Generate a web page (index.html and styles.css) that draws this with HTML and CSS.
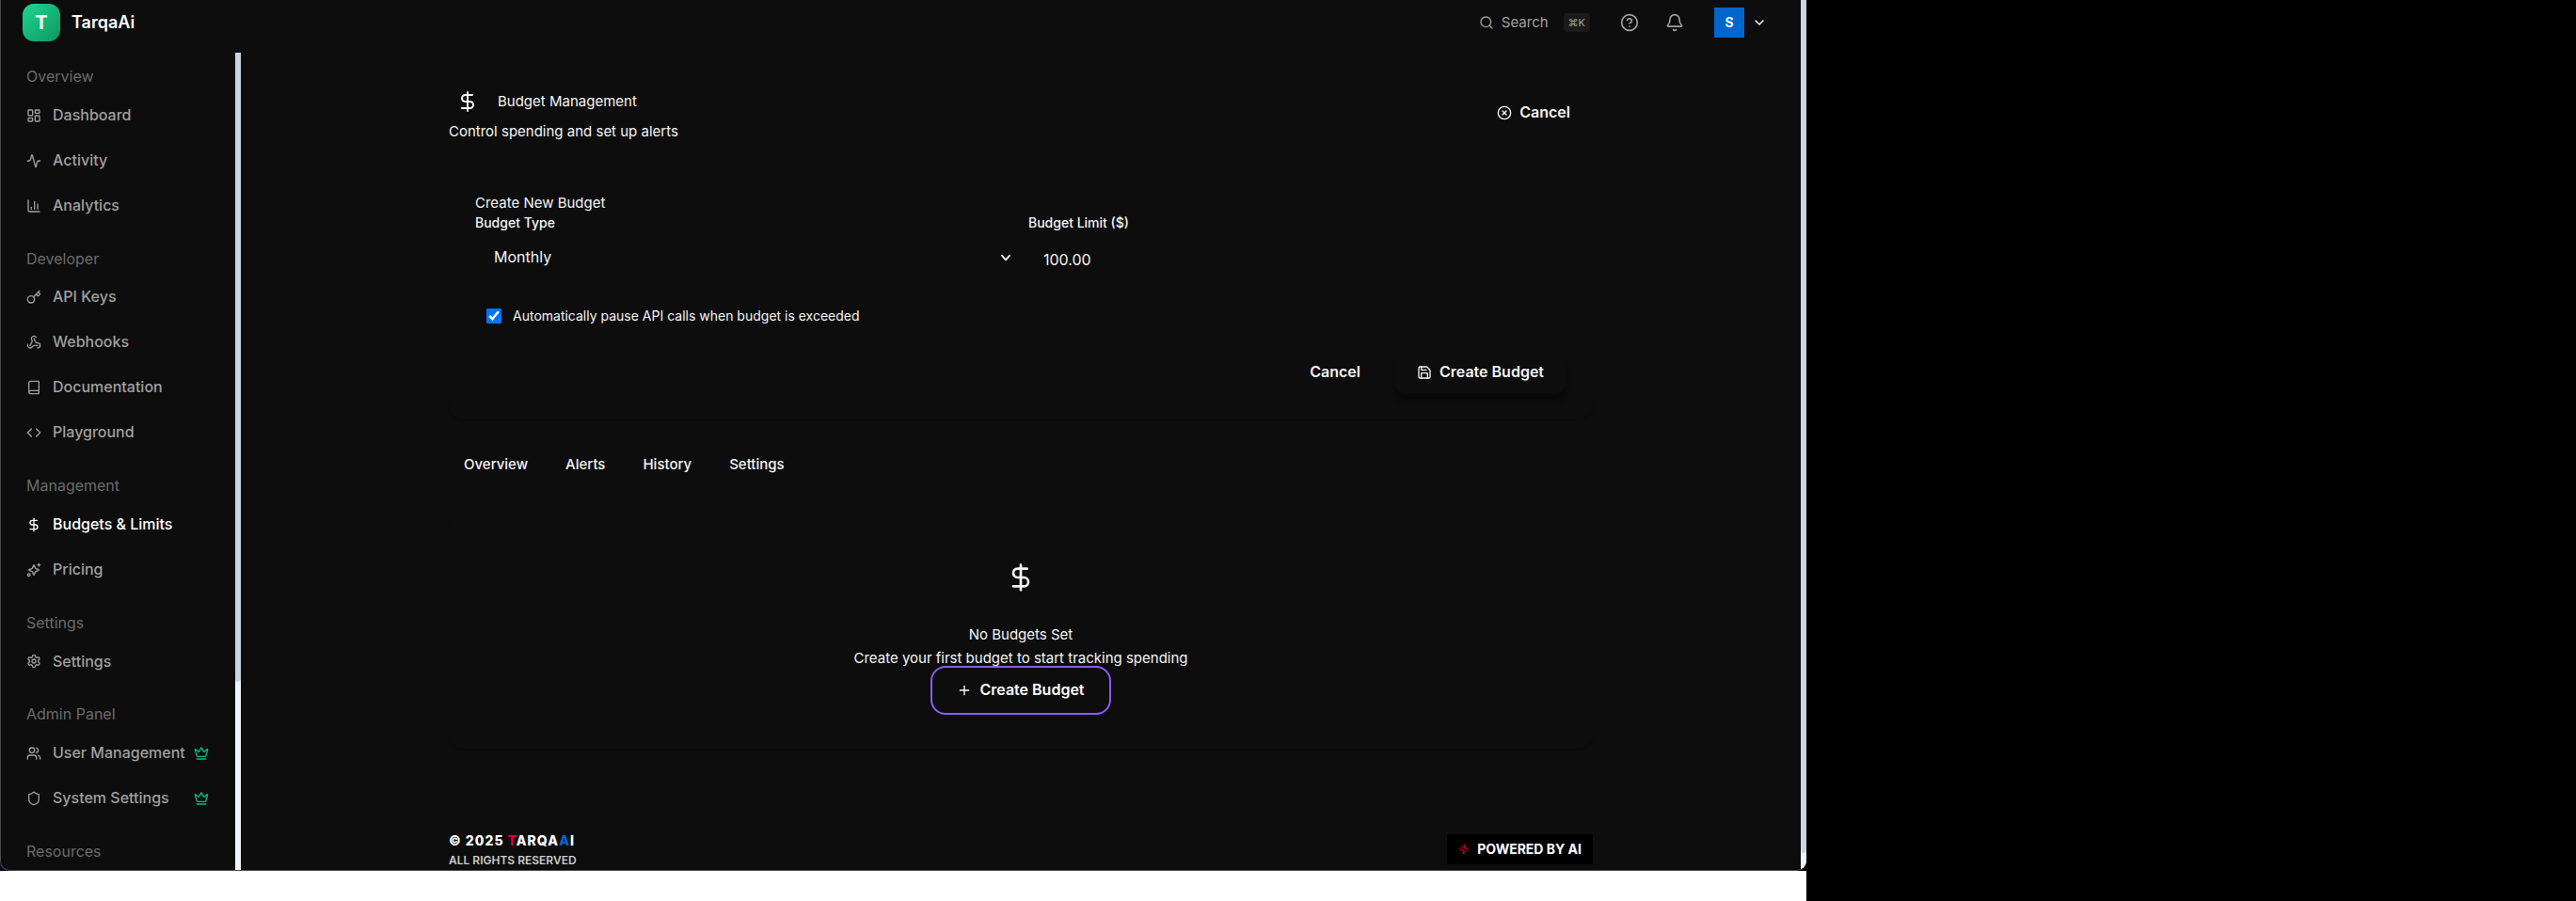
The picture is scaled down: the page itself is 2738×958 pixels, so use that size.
FILE: index.html
```html
<!DOCTYPE html>
<html lang="en">
<head>
    <meta charset="UTF-8">
    <meta name="viewport" content="width=device-width, initial-scale=1.0">
    <title>TarqaAi - Budgets &amp; Limits</title>
    <link rel="stylesheet" href="styles.css">
</head>
<body>
    <div class="screen">
        <div class="window">
        <div class="app">
            <div class="shell">
                <header class="topbar">
                    <a class="brand" href="#"><span class="brand-mark">T</span>TarqaAi</a>
                    <div class="topbar-actions">
                        <button class="search" type="button">
                            <svg class="icon" viewBox="0 0 24 24"><circle cx="11" cy="11" r="8"/><path d="m21 21-4.3-4.3"/></svg>
                            <span>Search</span>
                            <kbd>⌘K</kbd>
                        </button>
                        <button class="icon-btn" type="button" aria-label="Help">
                            <svg class="icon icon-md" viewBox="0 0 24 24"><circle cx="12" cy="12" r="10"/><path d="M9.09 9a3 3 0 0 1 5.83 1c0 2-3 3-3 3"/><path d="M12 17h.01"/></svg>
                        </button>
                        <button class="icon-btn" type="button" aria-label="Notifications">
                            <svg class="icon icon-md" viewBox="0 0 24 24"><path d="M10.27 21a2 2 0 0 0 3.46 0"/><path d="M3.26 15.33A1 1 0 0 0 4 17h16a1 1 0 0 0 .74-1.67C19.41 13.96 18 12.5 18 8A6 6 0 0 0 6 8c0 4.5-1.41 5.96-2.74 7.33"/></svg>
                        </button>
                        <button class="account" type="button">
                            <span class="avatar">S</span>
                            <svg class="icon" viewBox="0 0 24 24"><path d="m6 9 6 6 6-6"/></svg>
                        </button>
                    </div>
                </header>

                <div class="columns">
                    <nav class="sidebar">
                        <section class="nav-group">
                            <h2>Overview</h2>
                            <a href="#"><svg class="icon" viewBox="0 0 24 24"><rect x="3" y="3" width="7" height="9" rx="1"/><rect x="14" y="3" width="7" height="5" rx="1"/><rect x="14" y="12" width="7" height="9" rx="1"/><rect x="3" y="16" width="7" height="5" rx="1"/></svg>Dashboard</a>
                            <a href="#"><svg class="icon" viewBox="0 0 24 24"><path d="M22 12h-2.48a2 2 0 0 0-1.93 1.46l-2.35 8.36a.25.25 0 0 1-.48 0L9.24 2.18a.25.25 0 0 0-.48 0l-2.35 8.36A2 2 0 0 1 4.49 12H2"/></svg>Activity</a>
                            <a href="#"><svg class="icon" viewBox="0 0 24 24"><path d="M3 3v16a2 2 0 0 0 2 2h16"/><path d="M18 17V9"/><path d="M13 17V5"/><path d="M8 17v-3"/></svg>Analytics</a>
                        </section>
                        <section class="nav-group">
                            <h2>Developer</h2>
                            <a href="#"><svg class="icon" viewBox="0 0 24 24"><path d="m15.5 7.5 2.3 2.3a1 1 0 0 0 1.4 0l2.1-2.1a1 1 0 0 0 0-1.4L19 4"/><path d="m21 2-9.6 9.6"/><circle cx="7.5" cy="15.5" r="5.5"/></svg>API Keys</a>
                            <a href="#"><svg class="icon" viewBox="0 0 24 24"><path d="M18 16.98h-5.99c-1.1 0-1.95.94-2.48 1.9A4 4 0 0 1 2 17c.01-.7.2-1.4.57-2"/><path d="m6 17 3.13-5.78c.53-.97.1-2.18-.5-3.1a4 4 0 1 1 6.89-4.06"/><path d="m12 6 3.13 5.73C15.66 12.7 16.9 13 18 13a4 4 0 0 1 0 8"/></svg>Webhooks</a>
                            <a href="#"><svg class="icon" viewBox="0 0 24 24"><path d="M4 19.5v-15A2.5 2.5 0 0 1 6.5 2H19a1 1 0 0 1 1 1v18a1 1 0 0 1-1 1H6.5a1 1 0 0 1 0-5H20"/></svg>Documentation</a>
                            <a href="#"><svg class="icon" viewBox="0 0 24 24"><path d="m16 18 6-6-6-6"/><path d="m8 6-6 6 6 6"/></svg>Playground</a>
                        </section>
                        <section class="nav-group">
                            <h2>Management</h2>
                            <a class="active" href="#"><svg class="icon" viewBox="0 0 24 24"><path d="M12 2v20"/><path d="M17 5H9.5a3.5 3.5 0 0 0 0 7h5a3.5 3.5 0 0 1 0 7H6"/></svg>Budgets &amp; Limits</a>
                            <a href="#"><svg class="icon" viewBox="0 0 24 24"><path d="M9.94 15.5A2 2 0 0 0 8.5 14.06l-4.13-1.58a.5.5 0 0 1 0-.96L8.5 9.94A2 2 0 0 0 9.94 8.5l1.58-4.13a.5.5 0 0 1 .96 0l1.58 4.13a2 2 0 0 0 1.44 1.44l4.13 1.58a.5.5 0 0 1 0 .96l-4.13 1.58a2 2 0 0 0-1.44 1.44l-1.58 4.13a.5.5 0 0 1-.96 0z"/><path d="M20 2v4"/><path d="M22 4h-4"/><circle cx="4" cy="20" r="2"/></svg>Pricing</a>
                        </section>
                        <section class="nav-group">
                            <h2>Settings</h2>
                            <a href="#"><svg class="icon" viewBox="0 0 24 24"><path d="M12.22 2h-.44a2 2 0 0 0-2 2v.18a2 2 0 0 1-1 1.73l-.43.25a2 2 0 0 1-2 0l-.15-.08a2 2 0 0 0-2.73.73l-.22.38a2 2 0 0 0 .73 2.73l.15.1a2 2 0 0 1 1 1.72v.51a2 2 0 0 1-1 1.74l-.15.09a2 2 0 0 0-.73 2.73l.22.38a2 2 0 0 0 2.73.73l.15-.08a2 2 0 0 1 2 0l.43.25a2 2 0 0 1 1 1.73V20a2 2 0 0 0 2 2h.44a2 2 0 0 0 2-2v-.18a2 2 0 0 1 1-1.73l.43-.25a2 2 0 0 1 2 0l.15.08a2 2 0 0 0 2.73-.73l.22-.39a2 2 0 0 0-.73-2.73l-.15-.08a2 2 0 0 1-1-1.74v-.5a2 2 0 0 1 1-1.74l.15-.09a2 2 0 0 0 .73-2.73l-.22-.38a2 2 0 0 0-2.73-.73l-.15.08a2 2 0 0 1-2 0l-.43-.25a2 2 0 0 1-1-1.73V4a2 2 0 0 0-2-2z"/><circle cx="12" cy="12" r="3"/></svg>Settings</a>
                        </section>
                        <section class="nav-group">
                            <h2>Admin Panel</h2>
                            <a href="#"><svg class="icon" viewBox="0 0 24 24"><path d="M16 21v-2a4 4 0 0 0-4-4H6a4 4 0 0 0-4 4v2"/><circle cx="9" cy="7" r="4"/><path d="M22 21v-2a4 4 0 0 0-3-3.87"/><path d="M16 3.13a4 4 0 0 1 0 7.75"/></svg>User Management
                                <svg class="icon crown" viewBox="0 0 24 24"><path d="M11.56 3.27a.5.5 0 0 1 .88 0L15.39 8.87a1 1 0 0 0 1.52.29L21.18 5.5a.5.5 0 0 1 .8.52l-2.84 10.25a1 1 0 0 1-.95.73H5.81a1 1 0 0 1-.96-.73L2.02 6.02a.5.5 0 0 1 .8-.52l4.28 3.66a1 1 0 0 0 1.51-.29z"/><path d="M5 21h14"/></svg></a>
                            <a href="#"><svg class="icon" viewBox="0 0 24 24"><path d="M20 13c0 5-3.5 7.5-7.66 8.95a1 1 0 0 1-.67-.01C7.5 20.5 4 18 4 13V6a1 1 0 0 1 1-1c2 0 4.5-1.2 6.24-2.72a1.17 1.17 0 0 1 1.52 0C14.51 3.81 17 5 19 5a1 1 0 0 1 1 1z"/></svg>System Settings
                                <svg class="icon crown" viewBox="0 0 24 24"><path d="M11.56 3.27a.5.5 0 0 1 .88 0L15.39 8.87a1 1 0 0 0 1.52.29L21.18 5.5a.5.5 0 0 1 .8.52l-2.84 10.25a1 1 0 0 1-.95.73H5.81a1 1 0 0 1-.96-.73L2.02 6.02a.5.5 0 0 1 .8-.52l4.28 3.66a1 1 0 0 0 1.51-.29z"/><path d="M5 21h14"/></svg></a>
                        </section>
                        <section class="nav-group">
                            <h2>Resources</h2>
                            <div class="promo"></div>
                        </section>
                    </nav>
                    <div class="scrollbar side-scroll"><div class="thumb"></div></div>

                    <main class="content">
                        <div class="page-head">
                            <div>
                                <div class="page-title">
                                    <svg class="icon icon-lg" viewBox="0 0 24 24"><path d="M12 2v20"/><path d="M17 5H9.5a3.5 3.5 0 0 0 0 7h5a3.5 3.5 0 0 1 0 7H6"/></svg>
                                    <h1>Budget Management</h1>
                                </div>
                                <p>Control spending and set up alerts</p>
                            </div>
                            <button class="btn" type="button">
                                <svg class="icon" viewBox="0 0 24 24"><circle cx="12" cy="12" r="10"/><path d="m15 9-6 6"/><path d="m9 9 6 6"/></svg>
                                Cancel
                            </button>
                        </div>

                        <form class="card budget-form">
                            <h3>Create New Budget</h3>
                            <div class="fields">
                                <div class="field">
                                    <label for="budget-type">Budget Type</label>
                                    <div class="select-wrap">
                                        <select id="budget-type">
                                            <option>Monthly</option>
                                        </select>
                                        <svg class="icon select-arrow" viewBox="0 0 24 24"><path d="m5 8 7 8 7-8"/></svg>
                                    </div>
                                </div>
                                <div class="field">
                                    <label for="budget-limit">Budget Limit ($)</label>
                                    <input id="budget-limit" type="text" inputmode="decimal" value="100.00">
                                </div>
                            </div>
                            <div class="check">
                                <input id="auto-pause" type="checkbox" checked>
                                <label for="auto-pause">Automatically pause API calls when budget is exceeded</label>
                            </div>
                            <div class="form-actions">
                                <button class="btn" type="button">Cancel</button>
                                <button class="btn btn-raised" type="submit">
                                    <svg class="icon" viewBox="0 0 24 24"><path d="M15.2 3a2 2 0 0 1 1.4.6l3.8 3.8a2 2 0 0 1 .6 1.4V19a2 2 0 0 1-2 2H5a2 2 0 0 1-2-2V5a2 2 0 0 1 2-2z"/><path d="M17 21v-7a1 1 0 0 0-1-1H8a1 1 0 0 0-1 1v7"/><path d="M7 3v4a1 1 0 0 0 1 1h7"/></svg>
                                    Create Budget
                                </button>
                            </div>
                        </form>

                        <div class="tabs">
                            <button type="button">Overview</button>
                            <button type="button">Alerts</button>
                            <button type="button">History</button>
                            <button type="button">Settings</button>
                        </div>

                        <section class="card empty">
                            <svg class="icon icon-xl" viewBox="0 0 24 24"><path d="M12 2v20"/><path d="M17 5H9.5a3.5 3.5 0 0 0 0 7h5a3.5 3.5 0 0 1 0 7H6"/></svg>
                            <h3>No Budgets Set</h3>
                            <p>Create your first budget to start tracking spending</p>
                            <button class="btn btn-focused" type="button">
                                <svg class="icon" viewBox="0 0 24 24"><path d="M5 12h14"/><path d="M12 5v14"/></svg>
                                Create Budget
                            </button>
                        </section>

                        <footer class="footer">
                            <div>
                                <p class="copyright">© 2025 <span class="red">T</span>ARQA<span class="blue">A</span>I</p>
                                <p class="rights">ALL RIGHTS RESERVED</p>
                            </div>
                            <div class="powered">
                                <svg class="icon icon-sm" viewBox="0 0 24 24"><path d="M4 14a1 1 0 0 1-.78-1.63l9.9-10.2a.5.5 0 0 1 .86.46l-1.92 6.02A1 1 0 0 0 13 10h7a1 1 0 0 1 .78 1.63l-9.9 10.2a.5.5 0 0 1-.86-.46l1.92-6.02A1 1 0 0 0 11 14z"/></svg>
                                POWERED BY AI
                            </div>
                        </footer>
                    </main>
                </div>
            </div>
            <div class="scrollbar page-scroll"><div class="thumb"></div></div>
        </div>
        </div>
    </div>
</body>
</html>
```
FILE: styles.css
```css
* { box-sizing: border-box; }

body {
    margin: 0;
    background: #000;
    color: #f5f5f5;
    font-family: Inter, "Liberation Sans", sans-serif;
    font-size: 16px;
    line-height: 1.6;
}

h1, h2, h3, p { margin: 0; font-size: 15px; font-weight: 400; }
a { color: inherit; text-decoration: none; }
button, input, select { font: inherit; color: inherit; background: none; border: 0; padding: 0; margin: 0; }
button { cursor: pointer; }

.icon { width: 16px; height: 16px; flex: none; fill: none; stroke: currentColor; stroke-width: 2; stroke-linecap: round; stroke-linejoin: round; }
.icon-sm { width: 12px; height: 12px; }
.icon-md { width: 20px; height: 20px; }
.icon-lg { width: 24px; height: 24px; }
.icon-xl { width: 32px; height: 32px; }

/* Window on the left, empty desktop on the right */
.screen { display: grid; grid-template-columns: 960fr 409fr; height: 100vh; }
.window { min-width: 0; padding-bottom: 32px; background: linear-gradient(#0a0418, #0a0418) top / 100% calc(100% - 32px) no-repeat #fff; }
.app { display: flex; height: calc(100vh - 32px); overflow: hidden; background: #0d0d0d; border: solid #4a4a4a; border-width: 0 0 1px 1px; border-radius: 0 0 10px 10px; }
.shell { flex: 1; min-width: 0; display: flex; flex-direction: column; }

.scrollbar { width: 6px; flex: none; background: #f1f5f9; }
.thumb { background: #cbd5e1; border-radius: 0 0 3px 3px; }
.side-scroll .thumb { height: 77%; }
.page-scroll .thumb { height: 98%; }

.topbar { display: flex; justify-content: space-between; align-items: center; height: 56px; padding: 0 36px 8px 23px; flex: none; }
.brand { display: flex; align-items: center; gap: 12px; font-size: 18px; font-weight: 600; color: #fff; }
.brand-mark { display: grid; place-items: center; width: 40px; height: 40px; border-radius: 12px; background: linear-gradient(135deg, #1dd792, #0f9460); font-size: 20px; font-weight: 700; }
.topbar-actions { display: flex; align-items: center; color: #a0a0a0; }
.search { display: flex; align-items: center; gap: 8px; margin-right: 24px; font-size: 15px; }
.search kbd { margin-left: 8px; padding: 0 5px; border-radius: 4px; background: #1a1a1a; font: 11px/20px Inter, "DejaVu Sans", sans-serif; }
.icon-btn { display: grid; place-items: center; width: 36px; height: 36px; margin-right: 12px; }
.account { display: flex; align-items: center; gap: 8px; margin-left: 12px; color: #fff; }
.avatar { display: grid; place-items: center; width: 32px; height: 32px; background: #0066cc; font-size: 14px; font-weight: 700; }

.columns { flex: 1; min-height: 0; display: flex; }
.sidebar { width: 249px; flex: none; overflow: hidden; padding: 13px 16px 0 15px; }
.nav-group { margin-bottom: 22px; }
.nav-group h2 { padding: 0 12px; margin-bottom: 6px; font-size: 16px; color: #6b6b6b; }
.nav-group a { display: flex; align-items: center; gap: 8px; height: 44px; margin-bottom: 4px; padding: 0 12px; font-weight: 500; color: #a0a0a0; white-space: nowrap; }
.nav-group a .icon:first-child { margin-right: 4px; }
.nav-group a.active { color: #fff; }
.nav-group .crown { margin-left: auto; color: #10b981; }
.promo { height: 44px; border-radius: 8px; background: #10382b; }

.content { flex: 1; min-width: 0; max-width: 1280px; margin: 0 auto; padding: 32px 32px 0; }
.page-head { display: flex; justify-content: space-between; align-items: center; margin-bottom: 34px; }
.page-title { display: flex; align-items: center; gap: 12px; }
.page-title .icon { margin: 8px; }

.btn { display: inline-flex; align-items: center; justify-content: center; gap: 8px; height: 44px; padding: 0 24px; border-radius: 12px; background: #0d0d0d; font-weight: 600; white-space: nowrap; }
.btn-raised { box-shadow: 0 10px 4px -1px #0a0a0a; }
.btn-focused { outline: 2px solid #8b5cf6; outline-offset: 2px; color: #fff; }

.card { border-radius: 16px; box-shadow: 0 2px 2px -1px #090909; }
.budget-form { padding: 18px 28px 28px; margin-bottom: 26px; }
.fields { display: grid; grid-template-columns: 1fr 1fr; gap: 16px; }
.field label { display: block; font-size: 14px; font-weight: 500; line-height: 18px; }
.select-wrap { position: relative; }
.field select, .field input { display: block; width: 100%; height: 44px; margin-top: 6px; border-radius: 12px; }
.field select { appearance: none; padding: 0 20px; }
.field input { padding: 4px 16px 0; }
.select-arrow { position: absolute; right: 0; top: 14px; padding: 1px; stroke-width: 3; pointer-events: none; }
.check { display: flex; align-items: center; gap: 12px; margin: 28px 12px 26px; font-size: 14px; line-height: 24px; }
.check input { width: 16px; height: 16px; accent-color: #0075ff; }
.form-actions { display: flex; justify-content: flex-end; gap: 12px; }

.tabs { display: flex; gap: 8px; margin-bottom: 26px; }
.tabs button { height: 44px; padding: 0 16px; font-size: 15px; font-weight: 500; }

.empty { display: flex; flex-direction: column; align-items: center; padding: 56px 40px 40px; }
.empty .icon-xl { margin-bottom: 32px; }
.empty h3, .empty p { line-height: 25px; }

.footer { display: flex; justify-content: space-between; align-items: center; padding-top: 86px; }
.copyright { font-size: 14px; font-weight: 800; letter-spacing: 1px; line-height: 24px; color: #fff; }
.rights { font-size: 12px; font-weight: 600; line-height: 18px; color: #ccc; }
.red { color: #e4002b; }
.blue { color: #0066cc; }
.powered { display: flex; align-items: center; gap: 8px; height: 32px; padding: 0 12px; background: #000; color: #fff; font-size: 14px; font-weight: 700; }
.powered .icon { color: #e4002b; }
```
